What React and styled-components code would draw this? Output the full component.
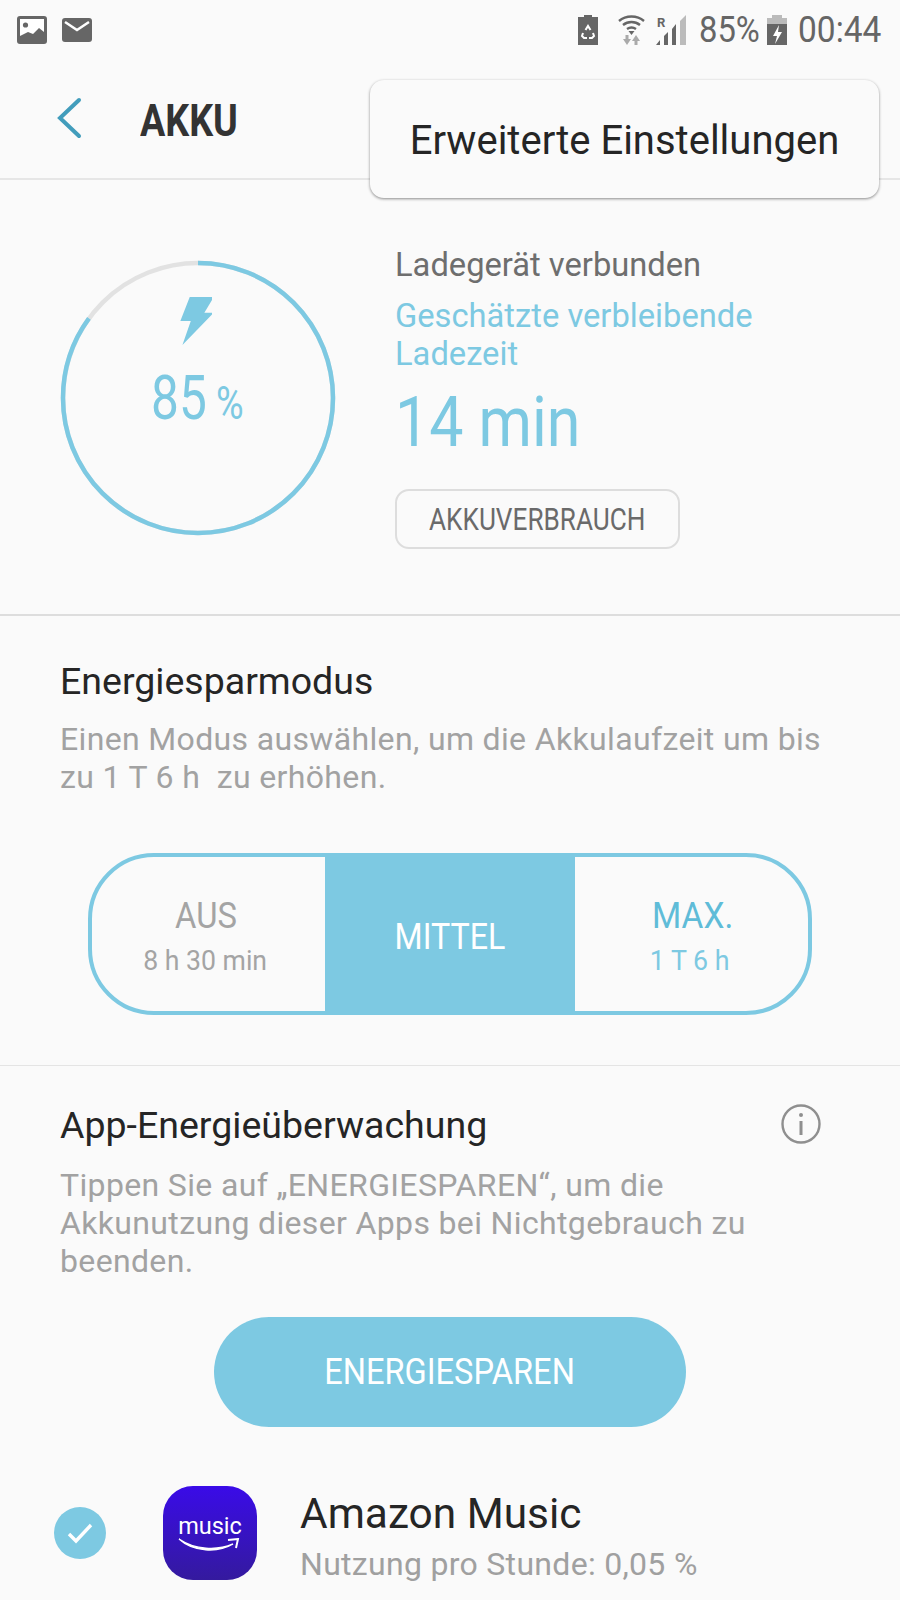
import React from "react";
import styled, { createGlobalStyle } from "styled-components";

const Global = createGlobalStyle`
  html, body { margin: 0; padding: 0; background: #fafafa; }
  body { font-family: Roboto, "Liberation Sans", sans-serif; }
  * { box-sizing: border-box; }
`;
const blue = "#7dc9e2";
const Phone = styled.div`position: relative; width: 900px; height: 1600px; overflow: hidden; background: #fafafa;`;
const Narrow = styled.span`
  display: inline-block; white-space: nowrap; transform: scaleX(${p => p.$x || 0.82}); transform-origin: ${p => p.$o || "left"} center;
`;
const StatusBar = styled.div`height: 64px; display: flex; align-items: center; padding: 0 20px 4px 17px; color: #666; justify-content: space-between;`;
const StatusGroup = styled.div`display: flex; align-items: center; gap: ${p => p.$gap || 0}px;`;
const StatusText = styled.div`font-size: 36px; line-height: 60px; color: #666; width: ${p => p.$w}px;`;
const Header = styled.div`height: 116px; display: flex; align-items: center; padding: 0 0 6px 57px; border-bottom: 2px solid #e6e6e6;`;
const HeaderTitle = styled.h1`margin: 6px 0 0 58px; font-size: 44px; font-weight: 700; color: #333; line-height: 48px;`;
const Popup = styled.div`
  position: absolute; left: 370px; top: 80px; width: 509px; height: 118px; padding-top: 2px; border-radius: 14px; background: #fafafa;
  box-shadow: 0 1px 3px rgba(0,0,0,.45); display: flex; align-items: center; justify-content: center;
  font-size: 40px; color: #252525;
`;
const Hero = styled.section`height: 436px; padding: 80px 0 0 60px; display: flex; border-bottom: 2px solid #ddd;`;
const Gauge = styled.div`position: relative; width: 276px; height: 276px; flex: none;`;
const GaugeValue = styled.div`position: absolute; left: 91px; top: 103px; color: ${blue}; font-size: 62px; line-height: 70px; display: flex; align-items: baseline;`;
const GaugeUnit = styled.span`font-size: 46px; margin-left: -5px;`;
const HeroInfo = styled.div`margin-left: 59px; display: flex; flex-direction: column; align-items: flex-start;`;
const Charger = styled.div`font-size: 32.7px; line-height: 38px; color: #6e6e6e; margin-top: -14px; height: 51px; white-space: nowrap;`;
const Remaining = styled.div`font-size: 32.7px; line-height: 38px; color: ${blue}; white-space: nowrap;`;
const Big = styled.div`font-size: 70px; line-height: 84px; color: ${blue}; margin-top: 7px;`;
const UsageBtn = styled.div`
  width: 285px; height: 60px; margin-top: 25px; border: 2px solid #ddd; border-radius: 14px; font-size: 31px; color: #6a6a6a;
  display: flex; align-items: center; justify-content: center;
`;
const Section = styled.section`padding: ${p => p.$top}px 60px 0; position: relative;`;
const SectionTitle = styled.h2`margin: 0; font-size: 37.5px; line-height: 44px; font-weight: 400; color: #252525;`;
const Desc = styled.p`margin: ${p => p.$top}px 0 0; font-size: 32px; line-height: 38px; color: #a2a2a2; letter-spacing: .35px; width: 800px; white-space: nowrap;`;
const Toggle = styled.div`
  margin: 57px 0 50px 28px; width: 724px; height: 162px; border: 4px solid ${blue}; border-radius: 66px; display: grid;
  grid-template-columns: 233px 250px 1fr; overflow: hidden;
`;
const Mode = styled.div`
  display: flex; flex-direction: column; align-items: center; justify-content: center; background: ${p => p.$on ? blue : "transparent"};
  padding: 5px ${p => p.$r || 0}px 0 ${p => p.$l || 0}px;
`;
const ModeName = styled.div`font-size: 36px; line-height: 44px; color: ${p => p.$c};`;
const ModeSub = styled.div`font-size: 28px; line-height: 36px; color: ${p => p.$c}; margin: 5px ${p => p.$mr || 0}px 0 0;`;
const Divider = styled.div`border-top: 1px solid #e4e4e4;`;
const InfoIcon = styled.div`position: absolute; right: 79px; top: 38px;`;
const SaveBtn = styled.div`
  width: 472px; height: 110px; border-radius: 55px; background: ${blue}; margin: 37px auto 0; color: #fff; font-size: 36px;
  display: flex; align-items: center; justify-content: center;
`;
const AppRow = styled.div`display: flex; align-items: center; margin: 57px 0 0 54px;`;
const Check = styled.div`width: 52px; height: 52px; border-radius: 50%; background: ${blue}; display: flex; align-items: center; justify-content: center; flex: none;`;
const AppIcon = styled.div`
  width: 94px; height: 94px; margin-left: 57px; border-radius: 30px; background: linear-gradient(#3a0be8, #341a9e); color: #fff; flex: none;
  display: flex; flex-direction: column; align-items: center; justify-content: center; font-size: 23.5px; line-height: 24px;
`;
const AppText = styled.div`margin-left: 43px; padding-top: 5px;`;
const AppName = styled.div`font-size: 42.4px; line-height: 50px; color: #252525;`;
const AppUsage = styled.div`font-size: 32px; line-height: 36px; margin-top: 7px; color: #a0a0a0; letter-spacing: .3px;`;
const StatusIcon = styled.svg`margin-right: ${p => p.$m}px; flex: none;`;
const BoltIcon = styled.svg`position: absolute; left: 120px; top: 37px;`;

export default function App() {
  const r = 135;
  const c = 2 * Math.PI * r;
  return (
    <Phone>
      <Global />
      <StatusBar>
        <StatusGroup $gap={15}>
          <svg width="30" height="28" viewBox="0 0 30 28"><rect width="30" height="28" rx="3" fill="#666" /><path d="M3 3h24v13l-5-4-6 6-5-2-8 4z" fill="#fff" /><circle cx="8.5" cy="9" r="2.6" fill="#666" /></svg>
          <svg width="30" height="24" viewBox="0 0 30 24"><rect width="30" height="24" rx="3" fill="#666" /><path d="M3 4l12 8 12-8" fill="none" stroke="#fff" strokeWidth="2.5" /></svg>
        </StatusGroup>
        <StatusGroup>
          <StatusIcon $m={20} width="20" height="30" viewBox="0 0 20 30"><path d="M6 0h8v2h6v28H0V2h6z" fill="#666" /><path d="M7.5 15l2.5-4 2.5 4M5 18l-1 3 2 2h3M15 18l1 3-2 2h-3" fill="none" stroke="#fff" strokeWidth="2" /></StatusIcon>
          <StatusIcon $m={11} width="27" height="30" viewBox="0 0 27 30"><path d="M1 6c7-6 18-6 25 0M5 10c5-4 12-4 17 0M9 14c3-2 6-2 9 0" fill="none" stroke="#666" strokeWidth="2.4" /><path d="M13.5 20l-3-4h6z" fill="#666" /><path d="M9 30l-4-6h2.5v-4h3v4H13zM18 20l4 6h-2.5v4h-3v-4H14z" fill="#aaa" /></StatusIcon>
          <StatusIcon $m={13} width="30" height="30" viewBox="0 0 30 30"><path d="M0 30l4-5v5zM8 30v-9l4-4v13zM16 30V14l4-5v21z" fill="#666" /><path d="M24 30V6l6-6v30z" fill="#bbb" /><text x="1" y="12" fontSize="13" fontWeight="700" fontFamily="Roboto" fill="#666">R</text></StatusIcon>
          <StatusText $w={68}><Narrow $x={0.91}>85%</Narrow></StatusText>
          <StatusIcon $m={11} width="20" height="30" viewBox="0 0 20 30"><path d="M5 0h10v3h5v6H0V3h5z" fill="#bbb" /><path d="M0 9h20v21H0z" fill="#666" /><path d="M12 10l-6 11h4l-2 8 7-12h-4z" fill="#fff" /></StatusIcon>
          <StatusText $w={82}><Narrow $x={0.93}>00:44</Narrow></StatusText>
        </StatusGroup>
      </StatusBar>
      <Header>
        <svg width="25" height="42" viewBox="0 0 25 42"><path d="M22 3L3 21l19 18" fill="none" stroke="#429dbc" strokeWidth="4" strokeLinecap="round" /></svg>
        <HeaderTitle><Narrow $x={0.855}>AKKU</Narrow></HeaderTitle>
      </Header>
      <Popup>Erweiterte Einstellungen</Popup>
      <Hero>
        <Gauge>
          <svg width="276" height="276" viewBox="0 0 276 276">
            <circle cx="138" cy="138" r={r} fill="none" stroke="#e2e2e2" strokeWidth="4.5" />
            <circle cx="138" cy="138" r={r} fill="none" stroke={blue} strokeWidth="4.5" strokeDasharray={`${c * 0.85} ${c}`} transform="rotate(-90 138 138)" />
          </svg>
          <BoltIcon width="32" height="48" viewBox="0 0 30 46"><path d="M9 0h23l-9 15h9L2 46l8-23H0z" fill={blue} /></BoltIcon>
          <GaugeValue><Narrow $x={0.8}>85</Narrow><GaugeUnit><Narrow>%</Narrow></GaugeUnit></GaugeValue>
        </Gauge>
        <HeroInfo>
          <Charger>Ladegerät verbunden</Charger>
          <Remaining>Geschätzte verbleibende<br />Ladezeit</Remaining>
          <Big><Narrow $x={0.87}>14 min</Narrow></Big>
          <UsageBtn><Narrow $x={0.844} $o="center">AKKUVERBRAUCH</Narrow></UsageBtn>
        </HeroInfo>
      </Hero>
      <Section $top={43}>
        <SectionTitle>Energiesparmodus</SectionTitle>
        <Desc $top={17}>Einen Modus auswählen, um die Akkulaufzeit um bis<br />zu 1 T 6 h&nbsp; zu erhöhen.</Desc>
        <Toggle>
          <Mode $r={6}>
            <ModeName $c="#a4a4a4"><Narrow $x={0.91} $o="center">AUS</Narrow></ModeName>
            <ModeSub $c="#a4a4a4"><Narrow $x={0.95} $o="center">8 h 30 min</Narrow></ModeSub>
          </Mode>
          <Mode $on><ModeName $c="#fff"><Narrow $x={0.895} $o="center">MITTEL</Narrow></ModeName></Mode>
          <Mode $l={3}>
            <ModeName $c="#5fbcd8"><Narrow $x={0.93} $o="center">MAX.</Narrow></ModeName>
            <ModeSub $c={blue} $mr={6}><Narrow $x={0.957} $o="center">1 T 6 h</Narrow></ModeSub>
          </Mode>
        </Toggle>
      </Section>
      <Divider />
      <Section $top={37}>
        <SectionTitle>App-Energieüberwachung</SectionTitle>
        <InfoIcon>
          <svg width="40" height="40" viewBox="0 0 40 40"><circle cx="20" cy="20" r="18.5" fill="none" stroke="#8f8f8f" strokeWidth="2.4" /><circle cx="20" cy="11" r="2" fill="#8f8f8f" /><path d="M20 17v14" stroke="#8f8f8f" strokeWidth="3" /></svg>
        </InfoIcon>
        <Desc $top={19}>Tippen Sie auf „ENERGIESPAREN“, um die<br />Akkunutzung dieser Apps bei Nichtgebrauch zu<br />beenden.</Desc>
        <SaveBtn><Narrow $x={0.905} $o="center">ENERGIESPAREN</Narrow></SaveBtn>
      </Section>
      <AppRow>
        <Check><svg width="28" height="22" viewBox="0 0 28 22"><path d="M3 12l7 7L25 3" fill="none" stroke="#fff" strokeWidth="3.4" /></svg></Check>
        <AppIcon>
          <span>music</span>
          <svg width="64" height="14" viewBox="0 0 64 14"><path d="M1 1c16 11 38 12 54 5-15 9-40 8-54-5z" fill="#fff" stroke="#fff" strokeWidth="1.4" /><path d="M50 2l10-1-2 9" fill="none" stroke="#fff" strokeWidth="2" /></svg>
        </AppIcon>
        <AppText>
          <AppName>Amazon Music</AppName>
          <AppUsage>Nutzung pro Stunde: 0,05 %</AppUsage>
        </AppText>
      </AppRow>
    </Phone>
  );
}
